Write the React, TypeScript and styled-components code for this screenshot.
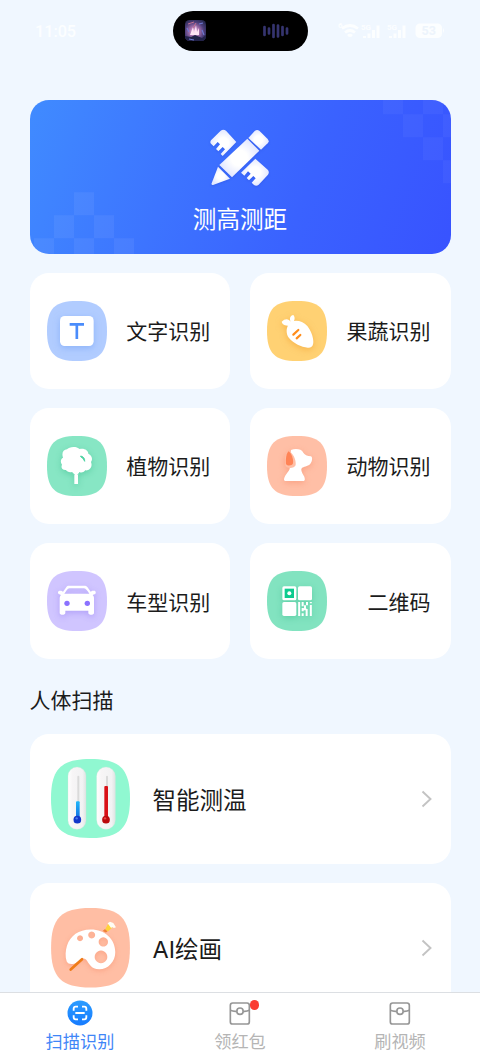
import React from 'react';
import styled, { createGlobalStyle } from 'styled-components';

const GlobalStyle = createGlobalStyle`
  * { box-sizing: border-box; }
  html, body { margin: 0; padding: 0; }
  body { font-family: "Noto Sans CJK SC", sans-serif; color: #1b1b1b; background: #f0f7ff; }
  svg { display: block; flex: none; }
`;

const Screen = styled.div`
  width: 480px;
  height: 1057px;
  display: flex;
  flex-direction: column;
  overflow: hidden;
  background: #f0f7ff;
`;

const StatusBar = styled.header`
  flex: none;
  height: 99.5px;
  padding: 10.5px 36px 0 35px;
  display: grid;
  grid-template-columns: 138px 134.5px 1fr;
  align-items: start;
`;

const Clock = styled.span`
  height: 41px;
  font: 500 16.2px/41px Roboto, sans-serif;
  color: #fcfeff;
`;

const Island = styled.div`
  height: 40.5px;
  border-radius: 21px;
  background: #000;
  padding: 0 19px 0 12px;
  display: flex;
  align-items: center;
  justify-content: space-between;
`;

const StatusIcons = styled.div`
  height: 41px;
  padding-left: 30px;
  display: flex;
  align-items: center;
`;

const Content = styled.main`
  flex: 1;
  min-height: 0;
  overflow: hidden;
  padding: 0 29.5px;
`;

const Banner = styled.section`
  position: relative;
  height: 154px;
  border-radius: 19px;
  overflow: hidden;
  padding-top: 29.5px;
  display: flex;
  flex-direction: column;
  align-items: center;
  color: #fff;
  background: linear-gradient(110deg, #408bff 0%, #3d74ff 35%, #3a62ff 65%, #3853ff 100%);
`;

const BannerPattern = styled.svg`
  position: absolute;
  inset: 0;
`;

const BannerTitle = styled.span`
  margin-top: 13.5px;
  font-size: 23.6px;
  line-height: 34px;
`;

const Grid = styled.section`
  margin-top: 19.5px;
  display: grid;
  grid-template-columns: 1fr 1fr;
  grid-auto-rows: 115.7px;
  gap: 19.4px;
`;

const FeatureCard = styled.div`
  padding: 0 20px 0 17px;
  display: flex;
  align-items: center;
  justify-content: space-between;
  border-radius: 19px;
  background: #fff;
`;

const FeatureLabel = styled.span`
  padding-bottom: 1px;
  font-size: 21px;
  line-height: 30px;
`;

const SectionTitle = styled.h2`
  margin: 25px 0 20px;
  font-size: 21px;
  line-height: 30px;
  font-weight: 400;
`;

const ListCard = styled.div`
  height: 130px;
  margin-bottom: 19px;
  padding: 0 17px 0 21px;
  display: flex;
  align-items: center;
  border-radius: 19px;
  background: #fff;
`;

const ListLabel = styled.span`
  flex: 1;
  margin-left: 23px;
  padding-top: 4px;
  font-family: Inter, "Noto Sans CJK SC", sans-serif;
  font-size: 23.5px;
  line-height: 34px;
`;

const TabBar = styled.nav`
  flex: none;
  height: 65px;
  border-top: 1px solid #dcdfe3;
  display: grid;
  grid-template-columns: repeat(3, 1fr);
  background: #fff;
`;

const Tab = styled.div<{ $active?: boolean }>`
  padding-top: 7px;
  display: flex;
  flex-direction: column;
  align-items: center;
  font-size: 17.2px;
  line-height: 24px;
  color: ${({ $active }) => ($active ? '#3f86f7' : '#b5b5b5')};
`;

const TabIcon = styled.span`
  position: relative;
  height: 27px;
  margin-bottom: 2px;
`;

const Dot = styled.i`
  position: absolute;
  left: 20.7px;
  top: 0;
  width: 9.5px;
  height: 9.5px;
  border-radius: 50%;
  background: #fa3c32;
`;

const SQUIRCLE =
  'M90 0C157 0 180 23 180 90C180 157 157 180 90 180C23 180 0 157 0 90C0 23 23 0 90 0Z';

function Tile({ fill, shadow, children }: {
  fill: string; shadow: string; children: React.ReactNode;
}) {
  return (
    <svg width="60" height="60" viewBox="0 0 180 180">
      <path d={SQUIRCLE} fill={fill} />
      <g style={{ filter: `drop-shadow(0 6px 9px ${shadow})` }}>{children}</g>
    </svg>
  );
}

const TextIcon = () => (
  <Tile fill="#b1ccff" shadow="#6a9cf380">
    <rect x="39" y="45" width="101" height="90" rx="14" fill="#fff" />
    <path d="M68 70H111M89.500 70V114" stroke="#4a8cfb" strokeWidth="8" fill="none" />
  </Tile>
);

const CarrotIcon = () => (
  <Tile fill="#ffd173" shadow="#f09a2680">
    <path d="M70 74C60 74 46 74 44 62C54 51 66 53 71 62C66 53 70 43 79 42C86 49 84 63 70 74Z" fill="#fff" />
    <path d="M66 68C76 54 105 56 121 75C133 90 142 115 138 130C137 138 130 141 122 140C103 138 80 128 66 111C56 98 57 80 66 68Z" fill="#fff" />
    <path d="M79 101L94 87M89 112L100 102" stroke="#ff8c1a" strokeWidth="6.500" strokeLinecap="round" fill="none" />
  </Tile>
);

const TreeIcon = () => (
  <Tile fill="#87e6c4" shadow="#32b98770">
    <path d="M60 40C65 32 88 29 98 39C111 35 124 43 124 53C135 58 138 71 132 78C138 93 127 105 115 103C109 110 103 111 97 108L93 116V144H82V116L75 108C67 110 60 107 57 102C45 103 41 94 45 86C38 78 43 66 48 65C43 50 49 41 60 40Z" fill="#fff" />
    <path d="M101 60C109 61 114 68 113 76C110 70 107 66 101 62Z" stroke="#4fd3a3" strokeWidth="3" fill="#4fd3a3" />
    <path d="M76 110L84 117M98 109L91 117" stroke="#87e6c4" strokeWidth="2" fill="none" />
  </Tile>
);

const DogIcon = () => (
  <Tile fill="#ffbfa6" shadow="#f4805a70">
    <path d="M72 42C84 37 104 38 109 50C112 56 121 60 132 61C138 64 135 78 129 85C122 91 109 93 105 96C99 101 107 113 112 122C115 132 113 135 109 135H55C48 134 52 126 54 121C60 109 71 104 68 88Z" fill="#fff" />
    <path d="M63 46C53 56 52 77 56 91C63 99 83 97 86 87C88 72 77 47 63 46Z" fill="#ffbfa6" />
    <path d="M64 46C56 57 56 74 57 84C62 92 76 89 78 82C80 70 73 50 64 46Z" fill="#ff8456" />
  </Tile>
);

const CarIcon = () => (
  <Tile fill="#d0c5ff" shadow="#8b75ef70">
    <path fillRule="evenodd" d="M60 46C62 44 65 44 68 44H111C116 44 119 45 121 48L131 62L136 59H143C148 61 147 69 142 70L137 72C141 76 141 79 141 84V126C141 133 124 133 124 126V119H55V126C55 133 38 133 38 126V84C38 79 39 75 42 72L37 70C31 68 32 60 37 59H43L48 62ZM67 52C61 53 58 60 52 68H127C121 59 117 53 111 52Z" fill="#fff" />
    <circle cx="60" cy="97" r="8" fill="#8b72ff" />
    <circle cx="121" cy="97" r="8" fill="#8b72ff" />
  </Tile>
);

const QrIcon = () => (
  <Tile fill="#82e3c0" shadow="#32b98770">
    <rect x="46" y="46" width="42" height="42" rx="5" fill="#fff" />
    <rect x="53" y="53" width="28" height="28" fill="#0dcb8f" />
    <circle cx="67" cy="67" r="6" fill="#fff" />
    <rect x="93" y="46" width="42" height="42" rx="5" fill="#fff" />
    <rect x="46" y="93" width="42" height="42" rx="5" fill="#fff" />
    <path d="M96.500 93V135M107 93V106M107 111V121M107 127V135M114 103V116M120 93V103M119 114V135M131.500 93V97M131.500 102V135M108 115H118" stroke="#fff" strokeWidth="6" fill="none" />
  </Tile>
);

function ThermoIcon() {
  return (
    <svg width="79" height="79" viewBox="0 0 237 237">
      <defs>
        <linearGradient id="tube" x1="0" x2="1"><stop stopColor="#fff" /><stop offset=".25" stopColor="#f7f5f6" /><stop offset=".8" stopColor="#f2f2f3" /><stop offset="1" stopColor="#dfe4e3" /></linearGradient>
        <linearGradient id="cold" x1="0" x2="0" y1="0" y2="1"><stop stopColor="#22b8fa" /><stop offset="1" stopColor="#1268e0" /></linearGradient>
      </defs>
      <path d={SQUIRCLE} transform="scale(1.3167)" fill="#90f8d1" />
      <g stroke="#d7e4df" strokeWidth="1">
        <rect x="51" y="24" width="54" height="187" rx="27" fill="url(#tube)" />
        <rect x="137" y="24" width="56" height="187" rx="28" fill="url(#tube)" />
      </g>
      <path d="M82 53V130M168 53V85" stroke="#dadada" strokeWidth="6" strokeLinecap="round" />
      <rect x="75" y="127" width="11" height="55" rx="3" fill="url(#cold)" />
      <circle cx="79" cy="182" r="11.500" fill="#1237c9" />
      <circle cx="77" cy="178" r="3.500" fill="#4979ec" />
      <rect x="160" y="81" width="11" height="100" rx="3" fill="#d90f16" />
      <circle cx="165" cy="182" r="11.500" fill="#bb090d" />
      <circle cx="162" cy="178" r="3.500" fill="#ee4545" />
    </svg>
  );
}

function PaletteIcon() {
  return (
    <svg width="79" height="79.500" viewBox="0 0 237 239">
      <path d={SQUIRCLE} transform="scale(1.3167 1.328)" fill="#ffbea4" />
      <g style={{ filter: 'drop-shadow(0 5px 8px #f4805a60)' }}>
        <path fillRule="evenodd" d="M118 65C160 64 193 93 193 133C193 162 171 184 145 184C119 184 115 167 105 155C94 147 88 157 77 164C66 171 51 170 47 161C42 147 43 128 48 113C57 84 84 65 118 65ZM87 82a9 9 0 1 0 .1 0ZM122 71a10.500 10.500 0 1 0 .1 0ZM157 88a14 14 0 1 0 .1 0ZM150 128a19 19 0 1 0 .1 0Z" fill="#fff" />
      </g>
      <path d="M59 185L93 154" stroke="#ef7c18" strokeWidth="8" strokeLinecap="round" />
      <path d="M155 69L162 63L170 70L165 74Z" fill="#f08034" />
      <path d="M163 63L172 47L185 58L171 71Z" fill="#ffd33b" />
      <path d="M170 46L177 41L187 45L195 58L189 60L183 57L181 61Z" fill="#fffdf4" />
    </svg>
  );
}

const MeasureSvg = styled.svg`
  position: relative;
  filter: drop-shadow(0 1px 1px #2345d055);
`;

const MeasureIcon = () => (
  <MeasureSvg width="60" height="58" viewBox="572 118 180 174">
    <defs>
      <radialGradient id="whiteGlow"><stop offset=".4" stopColor="#fff" /><stop offset="1" stopColor="#e3e8ff" /></radialGradient>
    </defs>
    <g fill="url(#whiteGlow)">
      <path d="M604 123Q612 118 620 123L651 157L610 199L604 193L617 179L610 172L597 185L590 178L602 164L595 157L583 170L575 162Q571 158 575 152Z" />
      <path d="M708 207L746 241Q751 248 746 255L718 285Q711 291 704 286L697 279L709 266L702 259L689 272L682 265L694 252L686 245L675 258L665 249Z" />
      <path d="M684 147L720 183L638 263L600 226Z" />
      <path d="M687 145L706 124Q713 118 720 123L745 148Q751 155 745 161L725 180Z" />
      <path d="M596 231L632 267L581 286Q575 287 577 281Z" />
    </g>
  </MeasureSvg>
);

const Chevron = () => (
  <svg width="14" height="18" viewBox="0 0 14 18" fill="none" stroke="#c3c3c3" strokeWidth="1.900">
    <path d="M2.500 1.500L10.500 9L2.500 16.500" />
  </svg>
);

const ScanIcon = () => (
  <svg width="26" height="26" viewBox="0 0 78 78">
    <defs><linearGradient id="scan" x2="0" y2="1"><stop stopColor="#2b9cff" /><stop offset="1" stopColor="#167bff" /></linearGradient></defs>
    <circle cx="39" cy="39" r="37.500" fill="url(#scan)" />
    <path d="M20 32V26Q20 20 26 20H33M45 20H52Q58 20 58 26V32M58 46V52Q58 58 52 58H45M33 58H26Q20 58 20 52V46M25 39H53" fill="none" stroke="#fff" strokeWidth="5.500" />
  </svg>
);

const PacketIcon = () => (
  <svg width="22" height="26" viewBox="0 0 66 78" fill="none" stroke="#969696" strokeWidth="5">
    <rect x="4" y="9" width="57" height="63" rx="7" />
    <path d="M4 31Q13 35 23 34M43 34Q53 35 61 31" />
    <circle cx="33" cy="33.500" r="9.500" />
  </svg>
);

const AlbumArt = () => (
  <svg width="21" height="21" viewBox="0 0 21 21">
    <defs>
      <clipPath id="cover"><rect width="21" height="21" rx="4.500" /></clipPath>
      <radialGradient id="night" cx=".45" cy=".55" r=".65"><stop stopColor="#f3c5ef" /><stop offset=".35" stopColor="#a772af" /><stop offset=".7" stopColor="#4b3d79" /><stop offset="1" stopColor="#272850" /></radialGradient>
    </defs>
    <g clipPath="url(#cover)">
      <path d="M0 0H21V21H0Z" fill="url(#night)" />
      <path d="M5 15L8 7L9 13L11 5L12 12L14 8L14 15Z" fill="#ffe4f5" />
      <path d="M0 16L6 17L10 15L17 18L21 15V21H0Z" fill="#222249" />
      <path d="M14 4L18 3M17 10L19 15M2 8L4 12M4 19L9 20" stroke="#6f79d0" strokeWidth="1.200" />
      <path d="M3 4L9 2M11 3L8 8" stroke="#c07190" />
    </g>
  </svg>
);

const SoundWave = () => (
  <svg width="26" height="16" viewBox="0 0 26 16" stroke="#35346f" strokeWidth="2.700" strokeLinecap="round">
    <path d="M1.500 4V12M6 5.500V10.500M10.500 2V14M15 2.500V13.500M19.500 4V12M24 5.500V10.500" />
  </svg>
);

const SignalIcons = () => (
  <svg width="108" height="20" viewBox="0 0 108 20">
    <g fill="none" stroke="#fcfeff" strokeWidth="2.800">
      <path d="M4 7.500Q12 1.500 20 7.500M7 11.500Q12 7.500 17 11.500M10 15Q12 13.500 14 15" />
      <path d="M26.500 15V17M31 12.500V17M35.500 9V17M40 4.500V17M52.500 15V17M57 12.500V17M61.500 9V17M66 4.500V17" strokeWidth="3" />
    </g>
    <g fill="#fcfeff" fontFamily="Roboto, sans-serif" fontWeight="700" fontSize="8">
      <text x="0" y="7">6</text>
      <text x="23" y="9">5G</text>
      <text x="49" y="9">5G</text>
      <rect x="77.500" y="2.500" width="26.500" height="14.500" rx="4.500" />
      <path d="M105 7Q107 9.500 105 12Z" />
      <text x="83.500" y="14" fontSize="12.500" fill="#edf4fc">53</text>
    </g>
  </svg>
);

const features = [
  { label: '文字识别', Icon: TextIcon },
  { label: '果蔬识别', Icon: CarrotIcon },
  { label: '植物识别', Icon: TreeIcon },
  { label: '动物识别', Icon: DogIcon },
  { label: '车型识别', Icon: CarIcon },
  { label: '二维码', Icon: QrIcon },
];

const scans = [
  { label: '智能测温', Icon: ThermoIcon },
  { label: 'AI绘画', Icon: PaletteIcon },
];

export default function App() {
  return (
    <Screen>
      <GlobalStyle />
      <StatusBar>
        <Clock>11:05</Clock>
        <Island><AlbumArt /><SoundWave /></Island>
        <StatusIcons><SignalIcons /></StatusIcons>
      </StatusBar>
      <Content>
        <Banner>
          <BannerPattern width="421" height="154" viewBox="0 0 421 154" fill="#fff" fillOpacity=".06">
            <path d="M44 92.300h20v23h-20zM24 115.300h20v23h-20zM64 115.300h20v23h-20zM4 138.300h20v16h-20zM44 138.300h20v16h-20zM84 138.300h20v16h-20z" />
            <path fillOpacity=".04" d="M353 0h20v14.300h-20zM393 0h20v14.300h-20zM373 14.300h20v23h-20zM413 14.300h8v23h-8zM393 37.300h20v23h-20zM413 60.300h8v23h-8z" />
          </BannerPattern>
          <MeasureIcon />
          <BannerTitle>测高测距</BannerTitle>
        </Banner>
        <Grid>
          {features.map(({ label, Icon }) => (
            <FeatureCard key={label}><Icon /><FeatureLabel>{label}</FeatureLabel></FeatureCard>
          ))}
        </Grid>
        <SectionTitle>人体扫描</SectionTitle>
        {scans.map(({ label, Icon }) => (
          <ListCard key={label}><Icon /><ListLabel>{label}</ListLabel><Chevron /></ListCard>
        ))}
      </Content>
      <TabBar>
        <Tab $active><TabIcon><ScanIcon /></TabIcon>扫描识别</Tab>
        <Tab><TabIcon><PacketIcon /><Dot /></TabIcon>领红包</Tab>
        <Tab><TabIcon><PacketIcon /></TabIcon>刷视频</Tab>
      </TabBar>
    </Screen>
  );
}
